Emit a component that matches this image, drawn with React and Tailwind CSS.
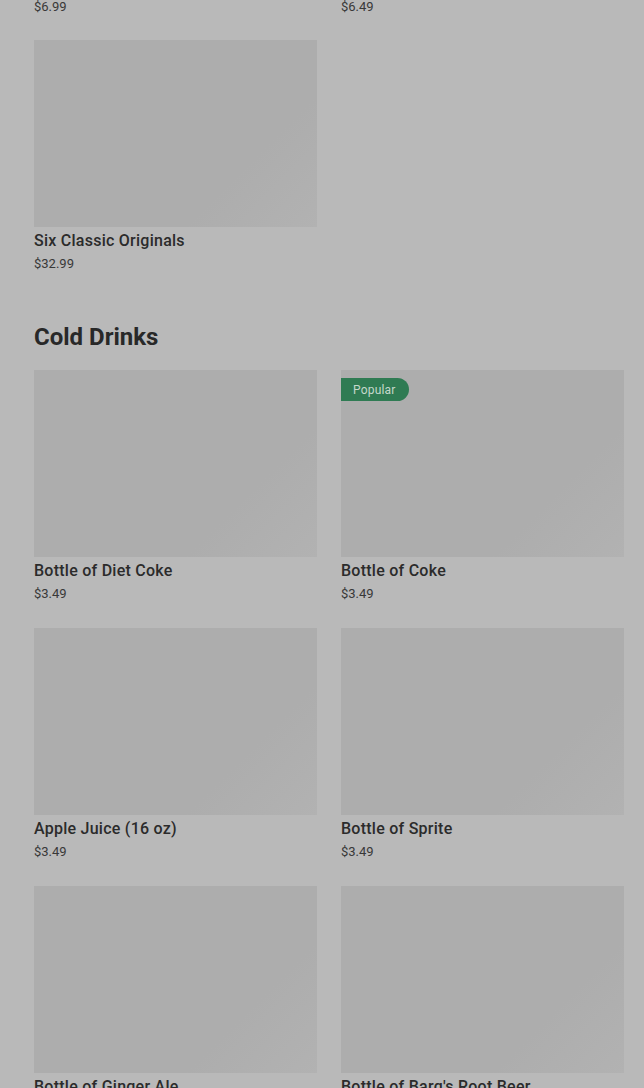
import React from 'react';

const items = [
  { name: 'Bottle of Diet Coke', price: '$3.49' },
  { name: 'Bottle of Coke', price: '$3.49', popular: true },
  { name: 'Apple Juice (16 oz)', price: '$3.49' },
  { name: 'Bottle of Sprite', price: '$3.49' },
  { name: 'Bottle of Ginger Ale', price: '$3.49' },
  { name: "Bottle of Barq's Root Beer", price: '$3.49' },
];

function ItemCard({ name, price, popular }) {
  return (
    <div className="flex flex-col">
      <div className="relative h-[187px] bg-[linear-gradient(135deg,#adadad_0%,#adadad_72%,#b2b2b2_100%)]">
        {popular && (
          <span className="absolute left-0 top-[8px] h-[23px] pl-[12px] pr-[13px] flex items-center rounded-r-full bg-[#2f7b53] text-[12px] tracking-[0.2px] text-[#c4d8cb]">
            Popular
          </span>
        )}
      </div>
      <p className="mt-[3px] text-[16px] leading-[22px] font-medium tracking-[0.25px] text-[#2b2b2b]">{name}</p>
      <p className="mt-[1px] text-[13px] leading-[22px] text-[#383838]">{price}</p>
    </div>
  );
}

export default function App() {
  return (
    <div className="min-h-[1088px] bg-[#b9b9b9] pl-[34px] pr-[20px] font-['Roboto',sans-serif] overflow-hidden">
      <div className="grid grid-cols-2 gap-x-[24px] mt-[-4px]">
        <p className="text-[13px] leading-[22px] text-[#383838]">$6.99</p>
        <p className="text-[13px] leading-[22px] text-[#383838]">$6.49</p>
      </div>
      <div className="grid grid-cols-2 gap-x-[24px] mt-[22px]">
        <ItemCard name="Six Classic Originals" price="$32.99" />
      </div>

      <h2 className="mt-[48px] text-[24px] leading-[28px] font-bold text-[#282828]">Cold Drinks</h2>

      <div className="grid grid-cols-2 gap-x-[24px] gap-y-[23px] mt-[19px]">
        {items.map(item => (
          <ItemCard key={item.name} {...item} />
        ))}
      </div>
    </div>
  );
}
